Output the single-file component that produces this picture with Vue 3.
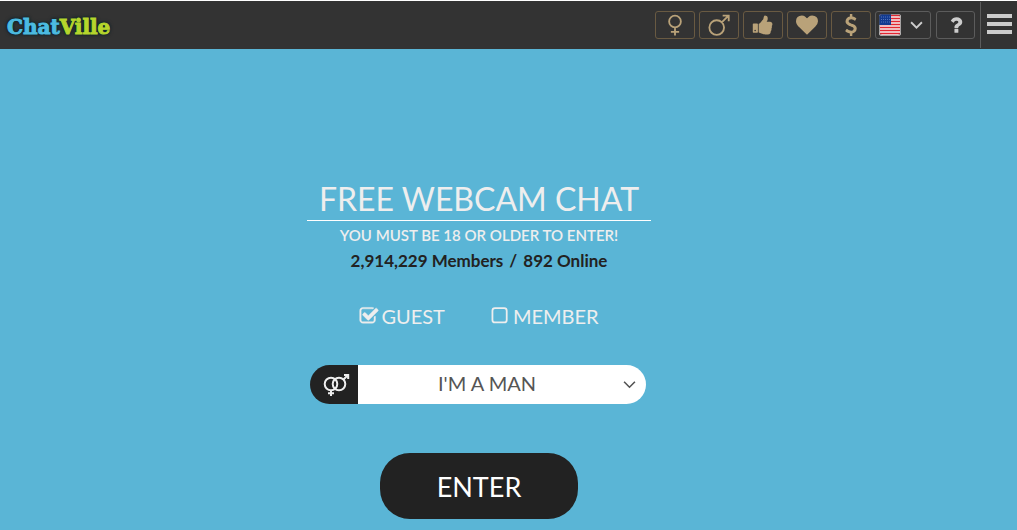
<script setup>
import { ref } from 'vue'

const mode = ref('guest')
const gender = ref('man')
const modes = [
  { id: 'guest', label: 'GUEST' },
  { id: 'member', label: 'MEMBER' },
]
const tools = [
  {
    name: 'Women',
    view: '0 0 24 24',
    line: 'M12 1.8a6.4 6.4 0 1 1 0 12.8a6.4 6.4 0 1 1 0-12.8M12 14.6V23.5M7.5 19.500h9',
  },
  {
    name: 'Men',
    view: '0 0 24 24',
    line: 'M9.5 6.8a8 8 0 1 1 0 16a8 8 0 1 1 0-16M15 9.2L22.4 1.800M16 1.800h6.600v6.200',
  },
  {
    name: 'Liked',
    view: '0 0 1792 1792',
    fill: 'M320 1344q0-26-19-45t-45-19q-27 0-45.5 19t-18.5 45q0 27 18.5 45.5t45.5 18.5q26 0 45-18.5t19-45.5zm160-512v640q0 26-19 45t-45 19h-288q-26 0-45-19t-19-45v-640q0-26 19-45t45-19h288q26 0 45 19t19 45zm1184 0q0 86-55 149 15 44 15 76 3 76-43 137 17 56 0 117-15 57-54 94 9 112-49 181-64 76-197 78h-129q-66 0-144-15.5t-121.5-29-120.5-39.5q-123-43-158-44-26-1-45-19.5t-19-44.5v-641q0-25 18-43.5t43-20.5q24-2 76-59t101-121q68-87 101-120 18-18 31-48t17.5-48.5 13.5-60.5q7-39 12.5-61t19.5-52 34-50q19-19 45-19 46 0 82.5 10.5t60 26 40 40.5 24 45 12 50 5 45 .5 39q0 38-9.5 76t-19 60-27.5 56q-3 6-10 18t-11 22-8 24h277q78 0 135 57t57 135z',
  },
  {
    name: 'Favorites',
    view: '0 0 1792 1792',
    fill: 'M896 1664q-26 0-44-18l-624-602q-10-8-27.5-26t-55.5-65.5-68-97.5-53.5-121-23.5-138q0-220 127-344t351-124q62 0 126.5 21.5t120 58 95.5 68.5 76 68q36-36 76-68t95.5-68.5 120-58 126.5-21.5q224 0 351 124t127 344q0 221-229 450l-623 600q-18 18-44 18z',
  },
  {
    name: 'Credits',
    view: '0 0 1792 1792',
    fill: 'M1362 1185q0 153-99.5 263.5t-258.5 136.5v175q0 14-9 23t-23 9h-135q-13 0-22.5-9.5t-9.5-22.5v-175q-66-9-127.5-31t-101.5-44.5-74-48-46.5-37.5-17.5-18q-17-21-2-41l103-135q7-10 23-12 15-2 24 9l2 2q113 99 243 125 37 8 74 8 81 0 142.5-43t61.5-122q0-28-15-53t-33.5-42-58.5-37.5-66-32-80-32.5q-39-16-61.5-25t-61.5-26.5-62.5-31-56.5-35.5-53.5-42.5-43.5-49-35.5-58-21-66.5-8.5-78q0-138 98-242t255-134v-180q0-13 9.5-22.5t22.5-9.5h135q14 0 23 9t9 23v176q57 6 110.5 23t87 33.5 63.5 37.5 39 29 15 14q17 18 5 38l-81 146q-8 15-23 16-14 3-27-7-3-3-14.5-12t-39-26.5-58.5-32-74.5-26-85.5-11.5q-95 0-155 43t-60 111q0 26 8.5 48t29.5 41.5 39.5 33 56 31 60.5 27 70 27.5q53 20 81 31.5t76 35 75.5 42.5 62 50 53 63.5 31.5 76.5 13 94z',
  },
]
</script>

<template>
  <header class="bar">
    <a class="logo" href="#"><span class="logo-chat">Chat</span><span class="logo-ville">Ville</span></a>
    <nav class="tools">
      <button v-for="t in tools" :key="t.name" class="tool gold" type="button" :aria-label="t.name">
        <svg class="icon" :viewBox="t.view">
          <path v-if="t.fill" :d="t.fill" fill="currentColor" />
          <path v-else :d="t.line" fill="none" stroke="currentColor" stroke-width="2" />
        </svg>
      </button>
      <button class="tool language" type="button" aria-label="Language">
        <svg class="flag" viewBox="0 0 22 22">
          <rect width="22" height="22" rx="3" fill="#f4eeee" />
          <path d="M1 1.5h20M1 4.5h20M1 7.5h20M1 10.5h20M1 13.5h20M1 16.5h20M1 19.5h20" stroke="#e32632" stroke-width="1.6" />
          <path d="M0 3q0-3 3-3h9v11H0z" fill="#123a91" />
          <path d="M2 3h9M2 5.500h9M2 8h9" stroke="#5574b6" stroke-dasharray="1 1" />
          <rect x=".5" y=".5" width="21" height="21" rx="3" fill="none" stroke="#555" stroke-opacity=".5" />
        </svg>
        <svg class="chevron" viewBox="0 0 12 12"><path d="M1 3l5 5 5-5" fill="none" stroke="currentColor" stroke-width="1.7" /></svg>
      </button>
      <button class="tool help" type="button" aria-label="Help">
        <svg class="icon" viewBox="0 0 1792 1792">
          <path fill="currentColor" d="M1088 1256v240q0 16-12 28t-28 12h-240q-16 0-28-12t-12-28v-240q0-16 12-28t28-12h240q16 0 28 12t12 28zm316-600q0 54-15.5 101t-35 76.5-55 59.5-57.5 43.5-61 35.5q-41 23-68.5 65t-27.5 67q0 17-12 32.5t-28 15.5h-240q-15 0-25.500-18.500t-10.500-37.500v-45q0-83 65-156.500t143-108.500q59-27 84-56t25-76q0-42-46.500-74t-107.500-32q-65 0-108 29-35 25-107 115-13 16-31 16-12 0-25-8l-164-125q-13-10-15.500-25t5.500-28q160-266 464-266 80 0 161 31t146 83 106 127.500 41 158.500z" />
        </svg>
      </button>
    </nav>
    <button class="menu" type="button" aria-label="Menu">
      <svg class="menu-icon" viewBox="0 0 25 20"><path d="M0 2h25M0 10h25M0 18h25" stroke="currentColor" stroke-width="4" /></svg>
    </button>
  </header>

  <main class="stage">
    <form class="entry" @submit.prevent>
      <h1>FREE WEBCAM CHAT</h1>
      <p class="notice">YOU MUST BE 18 OR OLDER TO ENTER!</p>
      <p class="stats"><span>2,914,229 Members</span><span>/</span><span>892 Online</span></p>

      <div class="modes">
        <label v-for="m in modes" :key="m.id" class="mode">
          <span class="tick">
            <input type="checkbox" :checked="mode === m.id" @change="mode = m.id" />
            <svg viewBox="0 0 1792 1792">
              <path v-if="mode === m.id" fill="currentColor" stroke="currentColor" stroke-width="40" d="M1472 930v318q0 119-84.500 203.500t-203.500 84.500h-832q-119 0-203.500-84.500t-84.500-203.500v-832q0-119 84.500-203.500t203.500-84.500h832q63 0 117 25 15 7 18 23 3 17-9 29l-49 49q-10 10-23 10-3 0-9-2-23-6-45-6h-832q-66 0-113 47t-47 113v832q0 66 47 113t113 47h832q66 0 113-47t47-113v-254q0-13 9-22l64-64q10-10 23-10 6 0 12 3 20 8 20 29zm231-489l-814 814q-24 24-57 24t-57-24l-430-430q-24-24-24-57t24-57l110-110q24-24 57-24t57 24l263 263 647-647q24-24 57-24t57 24l110 110q24 24 24 57t-24 57z" />
              <rect v-else x="128" y="192" width="1280" height="1280" rx="224" fill="none" stroke="currentColor" stroke-width="160" />
            </svg>
          </span>
          {{ m.label }}
        </label>
      </div>

      <div class="picker">
        <label class="picker-icon" for="gender" aria-label="I am">
          <svg viewBox="0 0 28 24">
            <g fill="none" stroke="currentColor" stroke-width="2">
              <circle cx="9" cy="11" r="6.300" />
              <circle cx="17" cy="11" r="6.300" />
              <path d="M9 17.300V23M6 20.300h6M21.500 6.500L26 2M22 1.900h4.200V6" />
            </g>
          </svg>
        </label>
        <select id="gender" v-model="gender">
          <option value="man">I'M A MAN</option>
          <option value="woman">I'M A WOMAN</option>
        </select>
        <svg class="picker-arrow" viewBox="0 0 12 12"><path d="M1 3.500l5 5 5-5" fill="none" stroke="currentColor" stroke-width="1.500" /></svg>
      </div>

      <button class="enter" type="submit">ENTER</button>
    </form>
  </main>
</template>

<style>
body {
  background: #5ab5d6;
}
</style>

<style scoped>
.bar,
.stage {
  font-family: Lato, "Liberation Sans", sans-serif;
}
button,
select {
  font-family: inherit;
  cursor: pointer;
}
svg {
  display: block;
}
.bar {
  display: flex;
  align-items: center;
  height: 48px;
  border-top: 1px solid #fff;
  background: #333;
}
.logo {
  margin-left: 7px;
  padding-top: 3px;
  font: bold 20px/28px "DejaVu Serif", serif;
  text-decoration: none;
  text-shadow: 0 0 2px #07242b, 0 0 3px #07242b, 0 0 4px #07242b;
  -webkit-text-stroke: 1px;
}
.logo-chat {
  color: #4cbbe0;
}
.logo-ville {
  color: #b5d52c;
}
.tools {
  display: flex;
  gap: 4px;
  margin-left: auto;
}
.tool {
  display: flex;
  align-items: center;
  justify-content: center;
  box-sizing: border-box;
  width: 40px;
  height: 28px;
  padding: 0;
  border: 1px solid #5c5c5c;
  border-radius: 3px;
  background: none;
  color: #ccc;
}
.gold {
  border-color: #695a42;
  color: #b9a279;
}
.icon {
  width: 22px;
  height: 22px;
}
.language {
  justify-content: space-between;
  width: 56px;
  padding: 0 7px 0 3px;
}
.flag {
  width: 22px;
  height: 22px;
}
.chevron {
  width: 13px;
  height: 13px;
}
.help {
  width: 39px;
  margin-left: 1px;
}
.menu {
  display: flex;
  align-items: center;
  justify-content: center;
  box-sizing: border-box;
  width: 37px;
  height: 46px;
  margin-left: 5px;
  padding: 0 0 2px;
  border: 0;
  border-left: 1px solid #5c5c5c;
  background: none;
  color: #ccc;
}
.menu-icon {
  width: 25px;
  height: 20px;
}
.stage {
  display: flex;
  justify-content: center;
  padding: 128px 59px 11px 0;
  color: #eee;
}
.entry {
  display: flex;
  flex-direction: column;
  align-items: center;
  width: 344px;
}
h1 {
  align-self: stretch;
  margin: 0;
  border-bottom: 1px solid #fff;
  font-size: 32px;
  font-weight: 400;
  line-height: 43px;
  text-align: center;
  white-space: nowrap;
}
.notice {
  margin: 3px 0 0;
  font-size: 15px;
  font-weight: 600;
  line-height: 22px;
}
.stats {
  display: flex;
  gap: 6px;
  margin: 3px 0 0;
  color: #222;
  font-size: 17px;
  font-weight: 700;
  line-height: 24px;
}
.modes {
  display: flex;
  gap: 46px;
  margin-top: 29px;
  font-size: 20px;
  line-height: 28px;
}
.mode {
  display: flex;
  align-items: center;
  gap: 2px;
}
.tick {
  position: relative;
  width: 20px;
  height: 20px;
}
.tick svg {
  overflow: visible;
}
.tick input {
  position: absolute;
  inset: 0;
  width: 100%;
  height: 100%;
  margin: 0;
  opacity: 0;
}
.picker {
  position: relative;
  display: flex;
  width: 336px;
  height: 39px;
  margin: 35px 2px 0 0;
  border-radius: 20px;
  overflow: hidden;
}
.picker-icon {
  display: flex;
  align-items: center;
  justify-content: center;
  padding-left: 4px;
  width: 44px;
  background: #222;
}
.picker-icon svg {
  width: 28px;
  height: 24px;
}
select {
  flex: 1;
  appearance: none;
  padding: 0 30px 3px 0;
  border: 0;
  background: #fff;
  color: #555;
  font-size: 20px;
  text-align: center;
  text-align-last: center;
}
.picker-arrow {
  position: absolute;
  top: 13px;
  right: 10px;
  width: 13px;
  height: 13px;
  color: #555;
  pointer-events: none;
}
.enter {
  width: 198px;
  height: 66px;
  margin-top: 49px;
  border: 0;
  border-radius: 30px;
  background: #222;
  color: #fff;
  font-size: 27px;
}
</style>
